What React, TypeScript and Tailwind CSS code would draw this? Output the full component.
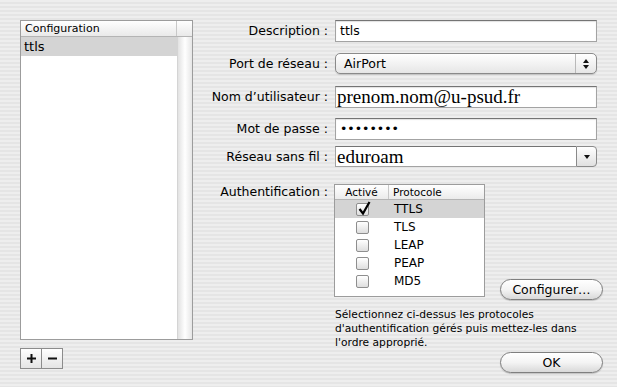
import * as React from 'react';

interface FieldRowProps {
  label: string;
  className?: string;
  children: React.ReactNode;
}

const FieldRow: React.FC<FieldRowProps> = ({ label, className, children }) => (
  <div className={`flex items-center ${className ?? ''}`}>
    <div className="w-[135px] text-right text-[12.5px] leading-[16px] whitespace-nowrap">{label}</div>
    <div className="ml-[7px] w-[262px]">{children}</div>
  </div>
);

const PillButton: React.FC<{ label: string; className?: string }> = ({ label, className }) => (
  <div
    className={`h-[21px] w-[103px] rounded-full border border-[#7f7f7f] bg-linear-to-b from-white via-[#f4f4f4] to-[#d9d9d9] shadow-[0_1px_1px_rgba(0,0,0,0.18)] flex items-center justify-center text-[12.5px] leading-[16px] ${className ?? ''}`}
  >
    {label}
  </div>
);

const CheckBox: React.FC<{ checked?: boolean }> = ({ checked }) => (
  <div className="relative w-[13px] h-[13px] rounded-[2px] border border-[#8e8e8e] bg-linear-to-b from-white to-[#dedede]">
    {checked && (
      <svg className="absolute left-[1px] top-[-3px]" width="13" height="15" viewBox="0 0 13 15">
        <polyline points="1.5,8 5,12.5 11.5,1" fill="none" stroke="#000" strokeWidth="2.2" />
      </svg>
    )}
  </div>
);

const protocols = [
  { name: 'TTLS', checked: true },
  { name: 'TLS', checked: false },
  { name: 'LEAP', checked: false },
  { name: 'PEAP', checked: false },
  { name: 'MD5', checked: false },
];

export default function App() {
  return (
    <div className="w-[617px] h-[387px] overflow-hidden flex pt-5 pl-5 text-black [font-family:'DejaVu_Sans',sans-serif] bg-[repeating-linear-gradient(to_bottom,#eeeeee_0px,#eeeeee_2px,#e5e5e5_2px,#e5e5e5_4px)]">
      {/* configurations list */}
      <div className="flex flex-col w-[173px]">
        <div className="h-[320px] border border-[#9c9c9c] bg-white flex flex-col">
          <div className="flex h-[16px] border-b border-[#b4b4b4] bg-linear-to-b from-white to-[#e9e9e9] text-[11px] leading-[15px]">
            <div className="flex-1 pl-[4px] border-r border-[#c8c8c8]">Configuration</div>
            <div className="w-[15px]" />
          </div>
          <div className="flex flex-1">
            <div className="flex-1">
              <div className="h-[19px] bg-[#d4d4d4] pl-[3px] text-[13px] leading-[19px]">ttls</div>
            </div>
            <div className="w-[15px] border-l border-[#d4d4d4] bg-linear-to-r from-[#e2e2e2] via-white to-[#e6e6e6]" />
          </div>
        </div>
        <div className="mt-2 flex h-[21px] w-[43px] border border-[#8c8c8c] bg-linear-to-b from-white to-[#e4e4e4]">
          <div className="flex-1 flex items-center justify-center border-r border-[#8c8c8c]">
            <svg width="9" height="9" viewBox="0 0 9 9">
              <rect x="0" y="3.5" width="9" height="2" fill="#111" />
              <rect x="3.5" y="0" width="2" height="9" fill="#111" />
            </svg>
          </div>
          <div className="flex-1 flex items-center justify-center">
            <svg width="9" height="9" viewBox="0 0 9 9">
              <rect x="0" y="3.5" width="9" height="2" fill="#111" />
            </svg>
          </div>
        </div>
      </div>

      {/* form */}
      <div className="flex flex-col">
        <FieldRow label="Description :">
          <div className="h-[22px] bg-white border border-[#a3a3a3] border-t-[#747474] shadow-[inset_0_1px_1px_rgba(0,0,0,0.12)] flex items-center pl-[4px] text-[12.5px]">
            ttls
          </div>
        </FieldRow>

        <FieldRow label="Port de réseau :" className="mt-[11px]">
          <div className="h-[21px] rounded-[5px] border border-[#8a8a8a] bg-linear-to-b from-white to-[#e6e6e6] flex items-center shadow-[0_1px_1px_rgba(0,0,0,0.15)]">
            <span className="flex-1 pl-[8px] text-[12.5px] leading-[16px]">AirPort</span>
            <div className="w-[21px] h-full border-l border-[#b9b9b9] flex flex-col items-center justify-center gap-[2px]">
              <svg width="6" height="4" viewBox="0 0 6 4">
                <polygon points="3,0 6,4 0,4" fill="#111" />
              </svg>
              <svg width="6" height="4" viewBox="0 0 6 4">
                <polygon points="0,0 6,0 3,4" fill="#111" />
              </svg>
            </div>
          </div>
        </FieldRow>

        <FieldRow label="Nom d’utilisateur :" className="mt-[12px]">
          <div className="h-[22px] bg-white border border-[#a3a3a3] border-t-[#747474] shadow-[inset_0_1px_1px_rgba(0,0,0,0.12)] flex items-center pl-[1px] text-[19px] leading-[20px] [font-family:'Liberation_Serif',serif]">
            prenom.nom@u-psud.fr
          </div>
        </FieldRow>

        <FieldRow label="Mot de passe :" className="mt-[10px]">
          <div className="h-[22px] bg-white border border-[#a3a3a3] border-t-[#747474] shadow-[inset_0_1px_1px_rgba(0,0,0,0.12)] flex items-center pl-[4px] text-[12.5px] tracking-[0px]">
            ••••••••
          </div>
        </FieldRow>

        <FieldRow label="Réseau sans fil :" className="mt-[6px]">
          <div className="h-[21px] flex">
            <div className="flex-1 bg-white border border-[#a3a3a3] border-t-[#747474] border-r-0 flex items-center pl-[1px] text-[19px] leading-[20px] [font-family:'Liberation_Serif',serif]">
              eduroam
            </div>
            <div className="w-[21px] rounded-r-[4px] border border-[#8a8a8a] bg-linear-to-b from-white to-[#e0e0e0] flex items-center justify-center">
              <svg width="6" height="4" viewBox="0 0 6 4">
                <polygon points="0,0 6,0 3,4" fill="#111" />
              </svg>
            </div>
          </div>
        </FieldRow>

        <div className="mt-[17px] flex items-start">
          <div className="w-[135px] text-right text-[12.5px] leading-[16px]">Authentification :</div>
          <div className="ml-[6px] flex items-end">
            <div className="w-[151px] h-[113px] bg-white border border-[#9c9c9c]">
              <div className="flex h-[15px] border-b border-[#b4b4b4] bg-linear-to-b from-white to-[#ebebeb] text-[10.5px] leading-[14px]">
                <div className="w-[54px] text-center border-r border-[#c8c8c8]">Activé</div>
                <div className="pl-[4px]">Protocole</div>
              </div>
              {protocols.map((p) => (
                <div key={p.name} className={`flex h-[18px] items-center ${p.checked ? 'bg-[#d4d4d4]' : ''}`}>
                  <div className="w-[54px] flex justify-center">
                    <CheckBox checked={p.checked} />
                  </div>
                  <div className="pl-[5px] text-[12px] leading-[16px]">{p.name}</div>
                </div>
              ))}
            </div>
            <PillButton label="Configurer…" className="ml-[15px] mb-[-3px]" />
          </div>
        </div>

        <div className="ml-[142px] mt-[11px] text-[10.7px] leading-[14px] whitespace-nowrap">
          Sélectionnez ci-dessus les protocoles
          <br />
          d'authentification gérés puis mettez-les dans
          <br />
          l'ordre approprié.
        </div>

        <PillButton label="OK" className="ml-[307px] mt-[2px]" />
      </div>
    </div>
  );
}
